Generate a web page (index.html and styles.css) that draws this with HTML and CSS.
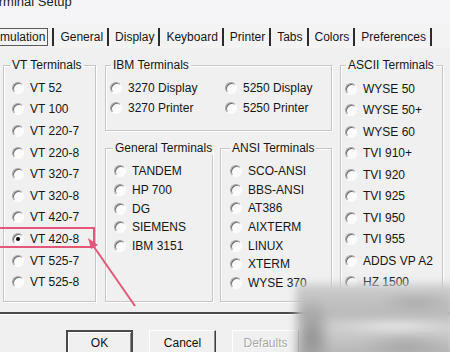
FILE: index.html
```html
<!DOCTYPE html>
<html lang="en">
<head>
  <meta charset="UTF-8" />
  <meta name="viewport" content="width=device-width, initial-scale=1" />
  <title>Terminal Setup</title>
  <link rel="stylesheet" href="styles.css">
</head>
<body>

  <div class="dialog">
    <div class="title-bar"><span class="title">Terminal Setup</span></div>

    <div class="tabs">
      <span class="tab first"><span class="tab-focus">Emulation</span></span>
      <span class="tab">General</span>
      <span class="tab">Display</span>
      <span class="tab">Keyboard</span>
      <span class="tab">Printer</span>
      <span class="tab">Tabs</span>
      <span class="tab">Colors</span>
      <span class="tab">Preferences</span>
    </div>

    <div class="panel">
      <fieldset class="group vt">
        <legend>VT Terminals</legend>
        <div class="items">
          <label class="radio"><i></i>VT 52</label>
          <label class="radio"><i></i>VT 100</label>
          <label class="radio"><i></i>VT 220-7</label>
          <label class="radio"><i></i>VT 220-8</label>
          <label class="radio"><i></i>VT 320-7</label>
          <label class="radio"><i></i>VT 320-8</label>
          <label class="radio"><i></i>VT 420-7</label>
          <label class="radio checked"><i></i>VT 420-8</label>
          <label class="radio"><i></i>VT 525-7</label>
          <label class="radio"><i></i>VT 525-8</label>
        </div>
      </fieldset>

      <div class="middle">
        <fieldset class="group ibm">
          <legend>IBM Terminals</legend>
          <div class="items ibm-grid">
            <label class="radio"><i></i>3270 Display</label>
            <label class="radio"><i></i>5250 Display</label>
            <label class="radio"><i></i>3270 Printer</label>
            <label class="radio"><i></i>5250 Printer</label>
          </div>
        </fieldset>

        <div class="middle-row">
          <fieldset class="group general">
            <legend>General Terminals</legend>
            <div class="items">
              <label class="radio"><i></i>TANDEM</label>
              <label class="radio"><i></i>HP 700</label>
              <label class="radio"><i></i>DG</label>
              <label class="radio"><i></i>SIEMENS</label>
              <label class="radio"><i></i>IBM 3151</label>
            </div>
          </fieldset>

          <fieldset class="group ansi">
            <legend>ANSI Terminals</legend>
            <div class="items">
              <label class="radio"><i></i>SCO-ANSI</label>
              <label class="radio"><i></i>BBS-ANSI</label>
              <label class="radio"><i></i>AT386</label>
              <label class="radio"><i></i>AIXTERM</label>
              <label class="radio"><i></i>LINUX</label>
              <label class="radio"><i></i>XTERM</label>
              <label class="radio"><i></i>WYSE 370</label>
            </div>
          </fieldset>
        </div>
      </div>

      <fieldset class="group ascii">
        <legend>ASCII Terminals</legend>
        <div class="items">
          <label class="radio"><i></i>WYSE 50</label>
          <label class="radio"><i></i>WYSE 50+</label>
          <label class="radio"><i></i>WYSE 60</label>
          <label class="radio"><i></i>TVI 910+</label>
          <label class="radio"><i></i>TVI 920</label>
          <label class="radio"><i></i>TVI 925</label>
          <label class="radio"><i></i>TVI 950</label>
          <label class="radio"><i></i>TVI 955</label>
          <label class="radio"><i></i>ADDS VP A2</label>
          <label class="radio"><i></i>HZ 1500</label>
        </div>
      </fieldset>
    </div>

    <div class="buttons">
      <button class="btn default">OK</button>
      <button class="btn">Cancel</button>
      <button class="btn" disabled>Defaults</button>
    </div>
  </div>

  <!-- annotation drawn over the screenshot -->
  <div class="highlight"></div>
  <svg class="arrow" width="60" height="80" viewBox="0 0 60 80">
    <line x1="9" y1="8" x2="52" y2="70" stroke="#e3587a" stroke-width="2" />
    <polygon points="5,2 15,9 8,13" fill="#e3587a" />
  </svg>
  <div class="smudge"></div>

</body>
</html>
```

FILE: styles.css
```css
body {
  margin: 0;
  width: 450px;
  height: 352px;
  overflow: hidden;
  position: relative;
  background: #f0f0f0;
  font-family: "Liberation Sans", Arial, sans-serif;
  font-size: 12px;
  color: #161616;
}

.title-bar {
  height: 24px;
  background: #f5f5f8;
  overflow: hidden;
}

.title {
  display: block;
  margin: -5px 0 0 -15px;
  font-size: 13px;
  line-height: 14px;
  color: #222;
  white-space: nowrap;
}

.tabs {
  display: flex;
  height: 24px;
  background: #f3f3f4;
  white-space: nowrap;
}

.tab {
  height: 18px;
  margin-top: 4px;
  padding: 0 4px 0 6px;
  line-height: 18px;
  border-right: 2px solid #2c2c2c;
}

.tab.first {
  margin-left: -14px;
}

.tab-focus {
  border: 1px solid #5a5a5a;
  padding: 1px 2px;
  margin-left: -3px;
}

/* tab page */
.panel {
  display: flex;
  height: 266px;
  box-sizing: border-box;
  padding: 10px 0 0 3px;
  border-bottom: 2px solid #4a4a4a;
  box-shadow: 0 1px 0 #fff;
}

.group {
  margin: 0;
  padding: 0;
  min-width: 0;
  box-sizing: border-box;
  border: 1px solid #c6c6c6;
  box-shadow: inset 1px 1px 0 #fff, 1px 1px 0 #fff;
}

.group legend {
  padding: 0 2px;
  line-height: 14px;
  white-space: nowrap;
}

.items {
  display: flex;
  flex-direction: column;
}

.radio {
  display: flex;
  align-items: center;
  white-space: nowrap;
}

.radio i {
  position: relative;
  width: 12px;
  height: 12px;
  margin-right: 6px;
  flex: none;
  box-sizing: border-box;
  border-radius: 50%;
  border: 1px solid;
  border-color: #a4a4a4 #fdfdfd #fdfdfd #a4a4a4;
  background: #fbfbfb;
  box-shadow: inset 1px 1px 0 #6e6e6e;
}

.radio.checked i::after {
  content: "";
  position: absolute;
  left: 3px;
  top: 3px;
  width: 4px;
  height: 4px;
  border-radius: 50%;
  background: #000;
}

.vt {
  width: 93px;
  height: 244px;
  margin-right: 9px;
}

.vt legend { margin-left: 6px; }
.vt .items { padding: 5px 0 0 8px; }
.vt .radio { height: 21.6px; }

.middle {
  display: flex;
  flex-direction: column;
  gap: 10px;
  width: 227px;
}

.ibm {
  height: 73px;
}

.ibm legend { margin-left: 5px; }

.ibm-grid {
  display: grid;
  grid-template-columns: 115px 1fr;
  grid-auto-rows: 20px;
  padding: 6px 0 0 4px;
}

.middle-row {
  display: flex;
  gap: 7px;
}

.general {
  width: 108px;
  height: 161px;
}

.general legend { margin-left: 7px; }
.general .items { padding: 7px 0 0 8px; }
.general .radio { height: 18.7px; }

.ansi {
  width: 112px;
  height: 161px;
}

.ansi legend { margin-left: 9px; }
.ansi .items { padding: 7px 0 0 9px; }
.ansi .radio { height: 18.6px; }

.ascii {
  width: 103px;
  height: 244px;
  margin-left: 8px;
}

.ascii legend { margin-left: 5px; }
.ascii .items { padding: 6px 0 0 4px; }
.ascii .radio { height: 21.5px; }

/* dialog buttons */
.buttons {
  display: flex;
  gap: 16px;
  padding: 16px 0 0 66px;
}

.btn {
  width: 67px;
  height: 26px;
  padding: 0;
  font-family: inherit;
  font-size: 12px;
  color: #111;
  background: #f0f0f0;
  border: 1px solid;
  border-color: #fff #3e3e3e #3e3e3e #fff;
  box-shadow: inset -1px -1px 0 #8a8a8a;
}

.btn.default {
  border: 2px solid #4a4a4a;
  box-shadow: inset 1px 1px 0 #fff, inset -1px -1px 0 #8a8a8a;
}

.btn:disabled {
  color: #a8a8a8;
  text-shadow: 1px 1px 0 #fff;
  border-color: #fff #9a9a9a #9a9a9a #fff;
  box-shadow: none;
}

.highlight {
  position: absolute;
  left: -4px;
  top: 227px;
  width: 95px;
  height: 17px;
  border: 2px solid #e3587a;
}

.arrow {
  position: absolute;
  left: 83px;
  top: 236px;
}

.smudge {
  position: absolute;
  left: 296px;
  top: 284px;
  width: 160px;
  height: 76px;
  filter: blur(4px);
  background:
    radial-gradient(ellipse 60px 5px at 100px 42px, rgba(250, 250, 250, 0.95), rgba(250, 250, 250, 0)),
    radial-gradient(ellipse 20px 40px at 16px 52px, #8e8e8e, rgba(142, 142, 142, 0)),
    radial-gradient(ellipse 40px 10px at 120px 18px, #a9a9a9, rgba(169, 169, 169, 0)),
    radial-gradient(ellipse 50px 12px at 110px 62px, #a5a5a5, rgba(165, 165, 165, 0)),
    linear-gradient(180deg, #cdcdcd 0%, #b9b9b9 40%, #d2d2d2 55%, #b0b0b0 100%);
}
```
